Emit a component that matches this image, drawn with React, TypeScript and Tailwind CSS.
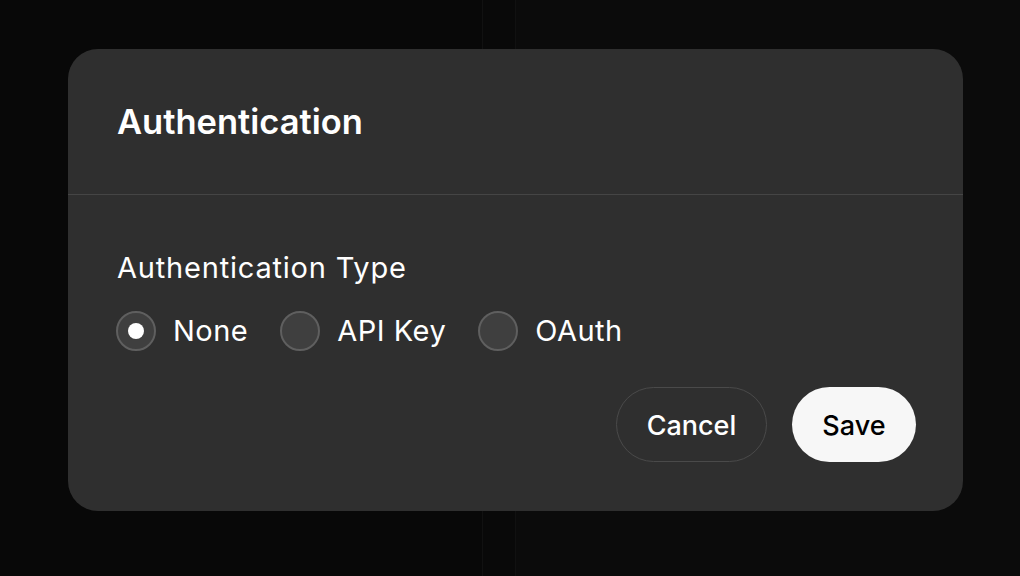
import React from "react";

function Radio({ label, checked }: { label: string; checked?: boolean }) {
  return (
    <div className="flex items-center gap-[17px]">
      <div className="flex h-[40px] w-[40px] items-center justify-center rounded-full border-2 border-[#5f5f5f] bg-[#3f3f3f]">
        {checked && <div className="h-[16px] w-[16px] rounded-full bg-white" />}
      </div>
      <span className="text-[29px] leading-[32px] tracking-[0.5px] text-white">{label}</span>
    </div>
  );
}

export default function App() {
  return (
    <div
      className="relative h-[576px] w-[1020px] overflow-hidden bg-[#080808]"
      style={{ fontFamily: "Inter, 'Noto Sans', sans-serif" }}
    >
      <div className="flex h-full w-full">
        <div className="h-full w-[482px] bg-[#080808]" />
        <div className="h-full w-[34px] border-l border-r border-[#111111] bg-[#090909]" />
        <div className="h-full flex-1 bg-[#0b0b0b]" />
      </div>

      <div className="absolute left-[68px] top-[49px] flex w-[895px] flex-col rounded-[30px] bg-[#2f2f2f]">
        <div className="flex h-[146px] items-center border-b border-[#454545] pl-[49px] pr-[47px]">
          <h2 className="text-[34.5px] font-semibold leading-[40px] text-white">Authentication</h2>
        </div>
        <div className="flex flex-col pb-[49px] pl-[48px] pr-[47px] pt-[57px]">
          <div className="pl-[1px] text-[29px] leading-[32px] tracking-[0.8px] text-white">Authentication Type</div>
          <div className="mt-[27px] flex items-center gap-[32px]">
            <Radio label="None" checked />
            <Radio label="API Key" />
            <Radio label="OAuth" />
          </div>
          <div className="mt-[36px] flex justify-end gap-[25px]">
            <button className="flex h-[75px] items-center rounded-full border-[1.5px] border-[#4a4a4a] px-[29.5px] pt-[3px] text-[27px] font-medium text-white">
              Cancel
            </button>
            <button className="flex h-[75px] items-center rounded-full bg-[#f7f7f7] px-[30.5px] pt-[3px] text-[27px] font-medium text-black">
              Save
            </button>
          </div>
        </div>
      </div>
    </div>
  );
}
